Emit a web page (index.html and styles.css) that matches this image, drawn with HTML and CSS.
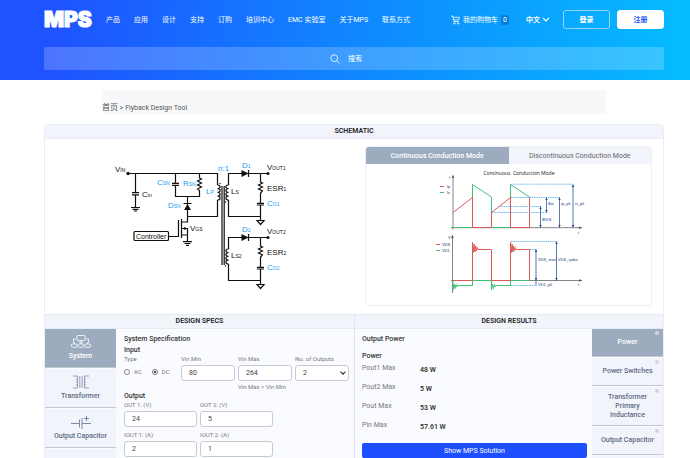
FILE: index.html
```html
<!DOCTYPE html>
<html lang="zh-CN">
<head>
<meta charset="utf-8">
<meta name="viewport" content="width=device-width, initial-scale=1">
<title>Flyback Design Tool</title>
<link rel="stylesheet" href="styles.css">
</head>
<body>
<header class="site-header">
  <div class="topbar">
    <a class="logo" href="#">MPS</a>
    <nav class="nav">
      <a href="#">产品</a><a href="#">应用</a><a href="#">设计</a><a href="#">支持</a><a href="#">订购</a><a href="#">培训中心</a><a href="#">EMC 实验室</a><a href="#">关于MPS</a><a href="#">联系方式</a>
    </nav>
    <div class="account">
      <a class="cart" href="#">
        <svg width="9" height="10" viewBox="0 0 9 10" fill="none" stroke="currentColor" stroke-width=".8"><path d="M0 1h1.7l1.3 5.6h4.8M2 2.3h6.4L7.6 5H2.7"/><circle cx="3.4" cy="8.4" r=".8"/><circle cx="7.2" cy="8.4" r=".8"/></svg>
        <span>我的购物车</span><span class="count">0</span>
      </a>
      <button class="lang" type="button">中文
        <svg width="8" height="6" viewBox="0 0 8 6" fill="none" stroke="currentColor" stroke-width="1.2"><path d="M1 1l3 3 3-3"/></svg>
      </button>
      <button class="btn btn-outline" type="button">登录</button>
      <button class="btn btn-solid" type="button">注册</button>
    </div>
  </div>
  <button class="search" type="button">
    <svg width="10" height="10" viewBox="0 0 10 10" fill="none" stroke="currentColor" stroke-width=".8"><circle cx="4.2" cy="4.2" r="3.4"/><path d="M6.7 6.7L9.6 9.6"/></svg>
    搜索
  </button>
</header>

<div class="breadcrumb"><a href="#">首页</a> &gt; Flyback Design Tool</div>

<main class="tool">
  <h2 class="bar">SCHEMATIC</h2>
  <section class="schematic">
    <div class="circuit">
      <svg width="200" height="150" viewBox="100 150 200 150">
        <g fill="none" stroke="#111" stroke-width="1.2">
          <path d="M128 173.5H217.5V185M217.5 200V216.5H187.5"/>
          <path d="M135.5 173V192.5M132 192.7h7M132 194.8h7M135.5 195v12M131 207.5h9M132.5 209.3h6M134 211h3"/>
          <path d="M175.5 173V183M172 183.3h7M172 185.3h7M175.5 185.5V196.5H199.5V191M199.5 173v5l2 1-4 2 4 2-4 2 4 2-4 2 2 1.5v2"/>
          <path d="M187.5 196.5V216.5M183.5 203.5h8"/>
          <path d="M187.5 216.5V222H182M181.5 219v19M178.5 220v16.5H169M182 228.5h5.5V241M182 235h5.5M183 241.7h9M184.5 243.5h6M186 245.3h3"/>
          <rect x="134" y="231.5" width="34.5" height="9" rx="1"/>
          <path d="M217.5 185c3.5 0 3.5 3.7 0 3.7c3.5 0 3.5 3.7 0 3.7c3.5 0 3.5 3.7 0 3.7c3.5 0 3.5 3.9 0 3.9"/>
          <path d="M222 186v79M224.2 186v79"/>
          <g id="output-stage">
            <path d="M268 173.5H260.5M260.5 216.5H228.5M260.5 173.5V182l2 1-4 2 4 2-4 2 4 2-2 2V203M257 203.3h7M257 205h7M260.5 205v15.5M257 220.5h7l-3.5 4z"/>
            <path d="M260.5 173.5H228.5M248.5 170v7"/>
            <path d="M241.500 170v7l7-3.500z" fill="#111" stroke="none"/>
            <circle cx="268" cy="173.500" r="1.500" fill="#111" stroke="none"/>
          </g>
          <use href="#output-stage" y="64"/>
          <path d="M228.500 173V185M228.500 200V217M228.500 237V249M228.500 264V281"/>
          <path id="coil" d="M228.500 185c-3.500 0-3.500 3.700 0 3.700c-3.500 0-3.500 3.700 0 3.700c-3.500 0-3.500 3.700 0 3.700c-3.500 0-3.500 3.900 0 3.900"/>
          <use href="#coil" y="64"/>
        </g>
        <g fill="#111">
          <circle cx="128" cy="173.500" r="1.700"/>
          <path d="M187.500 204l3.500 6h-7zM182.500 228.500l3-1.800v3.600z"/>
          <circle cx="220" cy="183.500" r=".7"/><circle cx="225.500" cy="202" r=".7"/><circle cx="225.500" cy="266" r=".7"/>
        </g>
        <g class="part">
          <text x="115" y="172">V<tspan class="sub">IN</tspan></text>
          <text x="142" y="197">C<tspan class="sub">in</tspan></text>
          <text x="190" y="231">V<tspan class="sub">GS</tspan></text>
          <text class="block" x="136" y="239">Controller</text>
          <text x="231" y="194">L<tspan class="sub">S</tspan></text>
          <text x="231" y="258">L<tspan class="sub">S2</tspan></text>
          <text x="267" y="170">V<tspan class="sub">OUT1</tspan></text>
          <text x="267" y="234">V<tspan class="sub">OUT2</tspan></text>
          <text x="267" y="191">ESR<tspan class="sub">1</tspan></text>
          <text x="267" y="255">ESR<tspan class="sub">2</tspan></text>
        </g>
        <g class="part part-blue">
          <text x="157" y="185">C<tspan class="sub">SN</tspan></text>
          <text x="183" y="186">R<tspan class="sub">SN</tspan></text>
          <text x="168" y="208">D<tspan class="sub">SN</tspan></text>
          <text x="206" y="194">L<tspan class="sub">P</tspan></text>
          <text x="218" y="171">n:1</text>
          <text x="242" y="168">D<tspan class="sub">1</tspan></text>
          <text x="242" y="232">D<tspan class="sub">2</tspan></text>
          <text x="267" y="206">C<tspan class="sub">O1</tspan></text>
          <text x="267" y="270">C<tspan class="sub">O2</tspan></text>
        </g>
      </svg>
    </div>
    <div class="modes">
      <div class="mode-tabs">
        <button class="mode active" type="button">Continuous Conduction Mode</button>
        <button class="mode" type="button">Discontinuous Conduction Mode</button>
      </div>
      <svg class="waves" width="170" height="134" viewBox="424 164 170 134">
        <path fill="none" stroke="#777" stroke-width=".9" d="M453 229.500V177M451 227.700H581M452.500 293V237M451 280.500H581"/>
        <path fill="#555" d="M451.700 178l1.300-3.500 1.300 3.500zM451.200 238l1.300-3.500 1.300 3.500zM579 226.400l3.500 1.300-3.500 1.300zM579 279.200l3.500 1.300-3.500 1.300z"/>
        <g fill="none" stroke="#3fbf78" stroke-width="1">
          <path d="M453 227.500H472.500V184.500L491.500 197V227.500H510.500V184.500L529.500 197V227.500M440 192.500h4M436 250.500h4"/>
          <path d="M453 280.500V290l1-6 1 4.500 1-4 1 2.500 1-2 1 .5H472.500V280.500H491.500V290l1-6 1 4.500 1-4 1 2.500 1-2 1 .5H510.500V280.500H529.500"/>
        </g>
        <g fill="none" stroke="#dc5a55" stroke-width="1">
          <path d="M453 212.500L472.500 197.500V227.500H491.500V212.500L510.500 197.500V227.500H529.500V197M440 186.500h4M436 244.500h4"/>
          <path d="M453 280.500H472.500V242l.8 10.500.8-8.500.8 8 .8-6 .8 5 .8-3.500.8 2H491.500V280.500H510.500V242l.8 10.500.8-8.500.8 8 .8-6 .8 5 .8-3.500.8 2H529.500V280.500"/>
        </g>
        <path fill="none" stroke="#4aa5ee" stroke-width=".8" stroke-dasharray="1.500 .8" d="M511 184.200H573M511 197.500H560M499 206.500H541M492 212.500H547M511 241.500H557M530 249.500H537M511 285.500H537"/>
        <path fill="none" stroke="#285a9c" stroke-width=".8" d="M546.500 197.500V212.500M540.500 206.500V227.500M559.500 197.500V227.500M573 184.500V227.500M536 249.500V285M556.500 241.500V280.500"/>
        <path fill="#1d4580" d="M545.300 200l1.200-2.500 1.200 2.500zM545.300 210l1.200 2.500 1.200-2.500zM539.300 209l1.200-2.500 1.200 2.500zM539.300 225l1.200 2.500 1.200-2.500zM558.300 200l1.200-2.500 1.200 2.500zM558.300 225l1.200 2.500 1.200-2.500zM571.800 187l1.200-2.500 1.200 2.500zM571.800 225l1.200 2.500 1.200-2.500zM534.800 252l1.200-2.500 1.200 2.500zM534.800 278l1.200 2.500 1.200-2.500zM555.300 244l1.200-2.500 1.200 2.500zM555.300 278l1.200 2.500 1.200-2.500z"/>
        <text class="wave-title" x="519" y="175" text-anchor="middle">Continuous &#160;Conduction Mode</text>
        <g class="wave-label">
          <text x="449" y="179">I</text><text x="447" y="188">Ip</text><text x="447" y="194">Is</text>
          <text x="548" y="205">Δio</text><text x="561" y="205">ip_pk</text><text x="575" y="205">is_pk</text>
          <text x="542" y="221">IEDS</text><text x="578" y="234">t</text>
          <text x="448" y="239">V</text><text x="442" y="246">VDS</text><text x="442" y="252">VD1</text>
          <text x="538" y="261">VDS_max</text><text x="558" y="261">VDS_spike</text><text x="538" y="286">VD1_pk</text><text x="578" y="286">t</text>
        </g>
      </svg>
    </div>
  </section>

  <div class="columns">
    <section class="col specs">
      <h2 class="bar">DESIGN SPECS</h2>
      <div class="col-body">
        <nav class="tabs">
          <button class="tab active" type="button">
            <svg width="20" height="14" viewBox="0 0 20 14" fill="none" stroke="currentColor" stroke-width=".8"><rect x="6" y=".5" width="8" height="5" rx="1"/><path d="M8 7.300h4M10 5.500V9M3.500 9V7.500H2.500V4h3M16.500 9V7.500h1V4h-3"/><rect x=".5" y="9" width="5.500" height="3.300" rx="1"/><rect x="7.300" y="9" width="5.500" height="3.300" rx="1"/><rect x="14" y="9" width="5.500" height="3.300" rx="1"/></svg>
            System</button>
          <button class="tab" type="button">
            <svg width="16" height="14" viewBox="0 0 16 14" fill="none" stroke="currentColor" stroke-width=".8"><path d="M0 1h4.500V13H0M4.500 4H3M4.500 7H3M4.500 10H3M6.800 1v12M9.200 1v12M16 1h-4.500V13H16M11.500 4H13M11.500 7H13M11.500 10H13"/></svg>
            Transformer</button>
          <button class="tab" type="button">
            <svg width="22" height="14" viewBox="0 0 22 14" fill="none" stroke="currentColor" stroke-width="1"><path d="M1 8.500h8M9.500 4.500v8M12 3v11M12 8.500h9M16.500 1v5M14 3.500h5"/></svg>
            Output Capacitor</button>
          <button class="tab" type="button" aria-label="Input Capacitor">
            <svg width="14" height="14" viewBox="0 0 14 14" fill="none" stroke="currentColor" stroke-width="1"><path d="M0 3h4M10 3h4M5 1h4M4 3h6v10H4z"/></svg>
          </button>
        </nav>
        <form class="form">
          <h3>System Specification</h3>
          <h4>Input</h4>
          <div class="grid four">
            <fieldset class="field">
              <legend>Type</legend>
              <div class="radios">
                <label><input type="radio" name="type">AC</label>
                <label><input type="radio" name="type" checked>DC</label>
              </div>
            </fieldset>
            <div class="field"><label for="vmin">Vin Min</label><input id="vmin" type="text" value="80"></div>
            <div class="field"><label for="vmax">Vin Max</label><input id="vmax" type="text" value="264"><p class="hint">Vin Max &gt; Vin Min</p></div>
            <div class="field pick"><label for="outs">No. of Outputs</label><select id="outs"><option>1</option><option selected>2</option></select></div>
          </div>
          <h4>Output</h4>
          <div class="grid three">
            <div class="field"><label for="o1">OUT 1: (V)</label><input id="o1" type="text" value="24"></div>
            <div class="field"><label for="o2">OUT 2: (V)</label><input id="o2" type="text" value="5"></div>
          </div>
          <div class="grid three">
            <div class="field"><label for="i1">IOUT 1: (A)</label><input id="i1" type="text" value="2"></div>
            <div class="field"><label for="i2">IOUT 2: (A)</label><input id="i2" type="text" value="1"></div>
          </div>
        </form>
      </div>
    </section>
    <section class="col results">
      <h2 class="bar">DESIGN RESULTS</h2>
      <div class="col-body">
        <div class="output">
          <h3>Output Power</h3>
          <h4>Power</h4>
          <dl>
            <dt>Pout1 Max</dt><dd>48 W</dd>
            <dt>Pout2 Max</dt><dd>5 W</dd>
            <dt>Pout Max</dt><dd>53 W</dd>
            <dt>Pin Max</dt><dd>57.61 W</dd>
          </dl>
          <button class="show" type="button">Show MPS Solution</button>
        </div>
        <nav class="tabs tabs-right">
          <button class="tab active" type="button">Power</button>
          <button class="tab" type="button">Power Switches</button>
          <button class="tab" type="button">Transformer Primary Inductance</button>
          <button class="tab" type="button">Output Capacitor</button>
          <button class="tab" type="button" aria-label="Input Capacitor"></button>
        </nav>
      </div>
    </section>
  </div>
</main>
</body>
</html>
```
FILE: styles.css
```css
* { box-sizing: border-box; }
body {
  margin: 0;
  height: 100vh;
  overflow: hidden;
  background: #fff;
  color: #333;
  font: 7px/10px Roboto, "Noto Sans CJK SC", sans-serif;
}
h2, h3, h4, p, dl, dd { margin: 0; }
a { color: inherit; text-decoration: none; }
button, input, select { font: inherit; color: inherit; margin: 0; }
button { border: 0; padding: 0; background: none; }

.site-header {
  height: 80px;
  padding: 10px 26px 0 44px;
  color: #fff;
  background: linear-gradient(90deg, #1f53ff 8%, #0e8bff 55%, #05bcff 100%);
}
.topbar { display: flex; align-items: center; height: 19px; }
.logo {
  width: 50px;
  font: 900 21px/18px Inter, sans-serif;
  -webkit-text-stroke: 1px #fff;
}
.nav { display: flex; gap: 14px; margin-left: 12px; white-space: nowrap; }
.account { display: flex; align-items: center; margin-left: auto; white-space: nowrap; }
.cart { display: flex; align-items: center; gap: 3px; }
.count { padding: 0 2px; border-radius: 2px; background: #0a7ddb; }
.lang { display: flex; align-items: center; gap: 2px; margin: 0 13px 0 17px; font-weight: 700; }
.btn { width: 47px; height: 19px; border: 1px solid #fff; border-radius: 3px; font-weight: 700; }
.btn-outline { border-color: #8fd3ff; }
.btn-solid { margin-left: 7px; background: #fff; color: #1f53ff; }
.search {
  display: flex;
  align-items: center;
  justify-content: center;
  gap: 8px;
  width: 100%;
  height: 23px;
  margin-top: 18px;
  padding-right: 16px;
  border-radius: 2px;
  background: rgba(255, 255, 255, .2);
}

.breadcrumb {
  margin: 10px 84px 10px 102px;
  height: 24px;
  padding-top: 13px;
  background: #f7f8fa;
  color: #555;
}
.breadcrumb a { font-size: 8px; }

.tool {
  margin: 0 26px 0 44px;
  border: 1px solid #e9edf8;
  border-radius: 4px 4px 0 0;
}
.bar {
  height: 14px;
  border-bottom: 1px solid #e6eaf5;
  background: #f2f4fc;
  color: #222;
  font-size: 7px;
  line-height: 13px;
  font-weight: 600;
  text-align: center;
}
.schematic { display: grid; grid-template-columns: 1fr 1fr; height: 176px; border-bottom: 1px solid #e6eaf5; }
.circuit { display: flex; justify-content: center; align-items: flex-start; padding-top: 11px; }
.part { font: 8px "Liberation Sans", sans-serif; fill: #111; }
.part-blue { fill: #1c9cf0; }
.sub { font-size: 5px; }
.block { font-size: 7px; }
.modes { margin: 7px 11px 8px; border: 1px solid #eceff9; border-radius: 4px; overflow: hidden; }
.mode-tabs { display: flex; }
.mode { flex: 1; height: 17px; background: #f2f4fc; color: #666; white-space: nowrap; }
.mode.active { background: #9dabbf; color: #fff; font-weight: 500; }
.waves { display: block; margin: 0 auto; }
.wave-title { font: 5px "Open Sans", sans-serif; fill: #111; }
.wave-label { font: 4px "Liberation Sans", sans-serif; fill: #173c78; }

.columns { display: grid; grid-template-columns: 1fr 1fr; }
.col + .col { border-left: 1px solid #dde3f1; }
.col-body { display: flex; background: #fafbff; }
.tabs { display: flex; flex-direction: column; flex: 0 0 71px; }
.tab {
  display: flex;
  flex-direction: column;
  align-items: center;
  justify-content: center;
  gap: 3px;
  height: 39px;
  margin-bottom: 1px;
  border-bottom: 1px solid #c2c7d0;
  background: #f2f4fc;
  color: #5d6b82;
  line-height: 9px;
  font-weight: 500;
  white-space: nowrap;
}
.tab svg { color: #7c8ca6; }
.tab.active, .tab.active svg { color: #fff; }
.tab.active { background: #9dabbf; }
.tabs-right .tab { position: relative; height: 28px; padding: 0 5px; white-space: normal; }
.tabs-right .tab:nth-child(3) { height: 39px; padding: 0 12px; }
.tabs-right .tab::after {
  content: "";
  position: absolute;
  top: 2px;
  right: 4px;
  width: 4px;
  height: 4px;
  border-radius: 50%;
  background: #d5d5d5;
}
h3, h4 { color: #333; font-size: 7px; font-weight: 500; }
h3 { line-height: 12px; }
h4 { line-height: 10px; }

.form { flex: 1; min-width: 0; padding: 4px 5px 0 8px; font-size: 6px; line-height: 8px; color: #777; }
.grid { display: grid; gap: 3px; margin-bottom: 4px; }
.four { grid-template-columns: repeat(4, 1fr); margin-bottom: 0; }
.three { grid-template-columns: repeat(3, 1fr); }
.field { min-width: 0; margin: 0; padding: 0; border: 0; }
.field > label, legend { display: block; padding: 0; white-space: nowrap; }
.field > input, select {
  display: block;
  width: 100%;
  height: 16px;
  margin-top: 2px;
  padding: 0 7px;
  border: 1px solid #c5cad3;
  border-radius: 3px;
  background: #fff;
  color: #444;
  font-size: 7px;
}
.field > select { appearance: none; }
.pick { position: relative; }
.pick::after {
  content: "";
  position: absolute;
  right: 4px;
  top: 15px;
  width: 3px;
  height: 3px;
  border: solid #222;
  border-width: 0 1px 1px 0;
  transform: rotate(45deg);
}
.hint { margin-top: 2px; white-space: nowrap; }
.radios { display: flex; gap: 10px; margin-top: 5px; }
.radios label { display: flex; align-items: center; gap: 4px; }
.radios input {
  appearance: none;
  width: 6px;
  height: 6px;
  border: 1px solid #888;
  border-radius: 50%;
  background: #fff;
}
.radios input:checked { border-color: #777; background: radial-gradient(#555 45%, #fff 55%); }

.output { flex: 1; padding: 4px 5px 0 7px; }
.output h4 { margin-top: 6px; }
.output dl { display: grid; grid-template-columns: 58px 1fr; grid-auto-rows: 19px; }
dt { padding-top: 2px; color: #777; }
dd { padding-top: 4px; color: #222; font-weight: 500; }
.show { width: 100%; height: 15px; margin-top: 6px; border-radius: 2px; background: #1d4fff; color: #fff; }
```
